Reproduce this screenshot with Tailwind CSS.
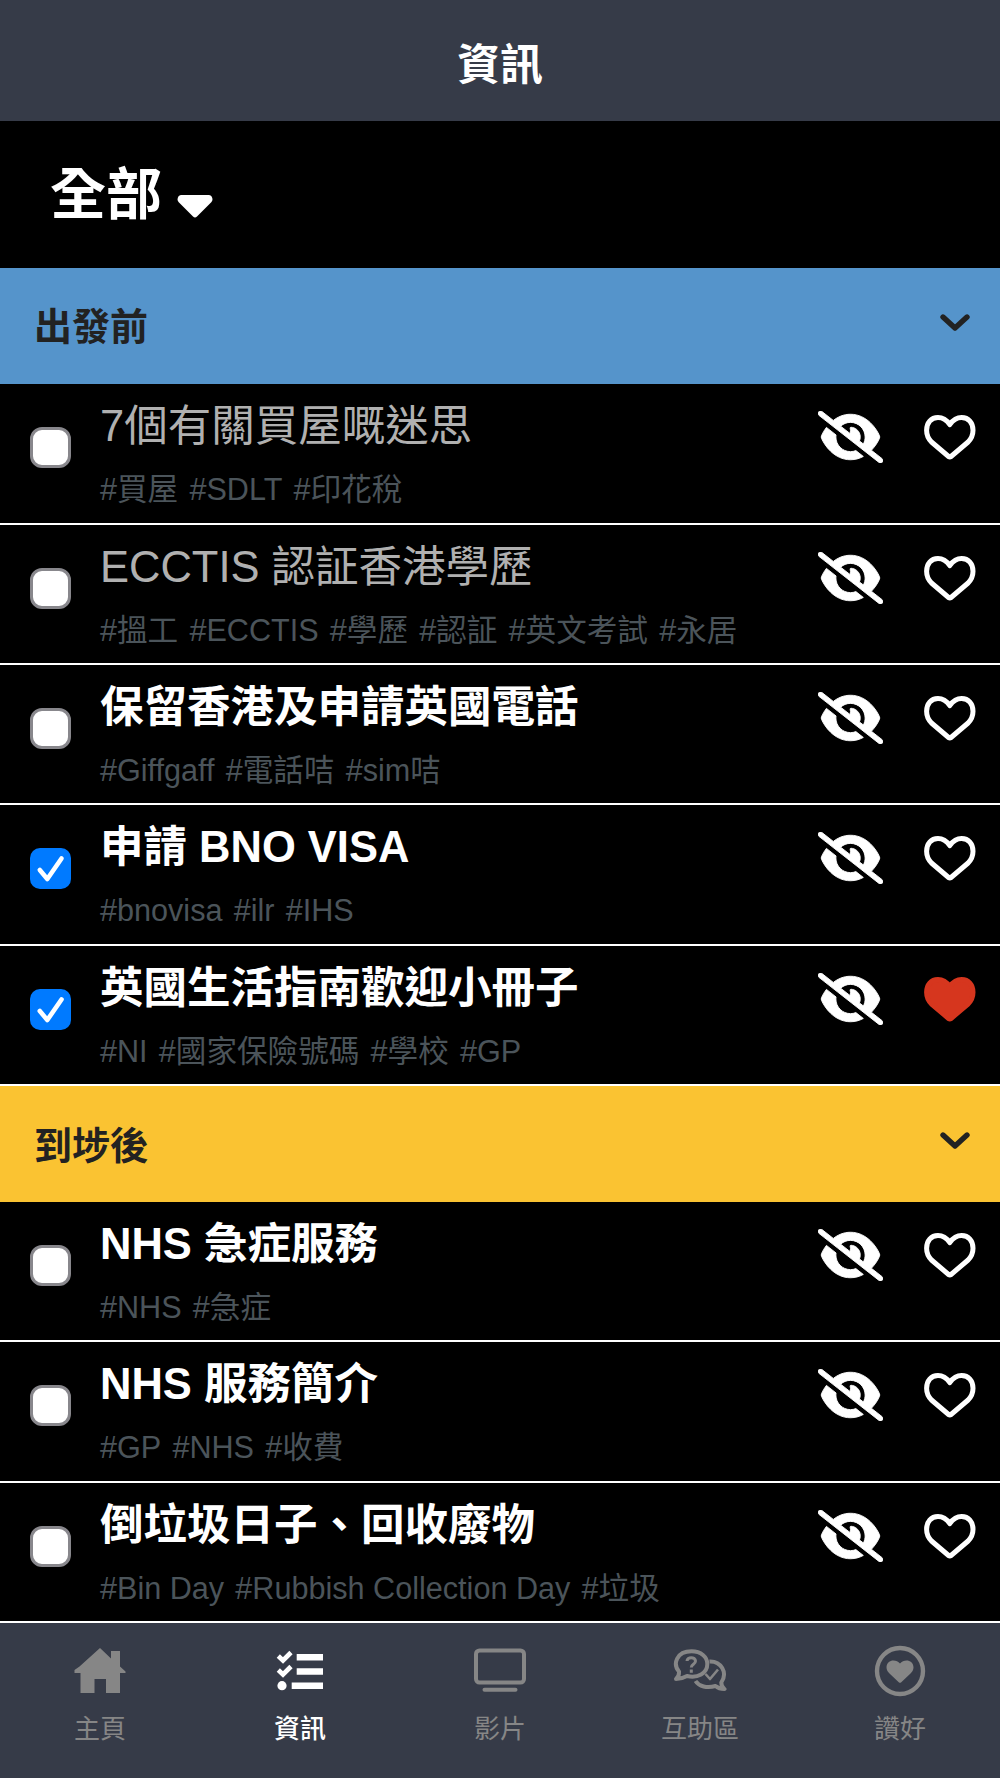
<!DOCTYPE html>
<html lang="zh-HK">
<head>
    <meta charset="UTF-8">
    <meta name="viewport" content="width=device-width, initial-scale=1.0">
    <title>資訊</title>
    <script src="https://cdn.jsdelivr.net/npm/@tailwindcss/browser@4"></script>
    <style>
        body {
            font-family: 'Liberation Sans', 'Noto Sans CJK TC', sans-serif;
        }
    </style>
</head>
<body class="bg-black text-white w-[1000px] h-[1778px] flex flex-col overflow-hidden">

    <!-- shared icons -->
    <svg class="hidden">
        <symbol id="eye-slash" viewBox="0 0 640 512">
            <path fill="currentColor" stroke="currentColor" stroke-width="9" d="M38.8 5.1C28.4-3.1 13.3-1.2 5.1 9.2S-1.2 34.7 9.2 42.9l592 464c10.4 8.2 25.5 6.3 33.7-4.1s6.3-25.5-4.1-33.7L525.6 386.7c39.6-40.6 66.4-86.1 79.9-118.4c3.3-7.9 3.3-16.7 0-24.6c-14.9-35.7-46.2-87.7-93-131.1C465.5 68.8 400.8 32 320 32c-68.2 0-125 26.3-169.3 60.8L38.8 5.1zM223.1 149.5C248.6 126.2 282.7 112 320 112c79.5 0 144 64.5 144 144c0 24.9-6.3 48.3-17.4 68.7L408 294.5c8.4-19.3 10.6-41.4 4.8-63.3c-11.1-41.5-47.8-69.4-88.6-71.1c-5.8-.2-9.2 6.1-7.4 11.7c2.1 6.4 3.3 13.2 3.3 20.3c0 10.2-2.4 19.8-6.6 28.3l-90.3-70.8zM373 389.9c-16.4 6.5-34.3 10.1-53 10.1c-79.5 0-144-64.5-144-144c0-6.9 .5-13.6 1.4-20.2L83.1 161.5C60.3 191.2 44 220.8 34.5 243.7c-3.3 7.9-3.3 16.7 0 24.6c14.9 35.7 46.2 87.7 93 131.1C174.5 443.2 239.2 480 320 480c47.8 0 89.9-12.9 126.2-32.5L373 389.9z"/>
        </symbol>
        <symbol id="heart" viewBox="0 0 52 45">
            <path stroke="currentColor" stroke-width="5" stroke-linejoin="round" d="M25.8 9.6C22.5 5 18 2.6 14 2.6C7 2.6 2.6 8 2.6 15.3C2.6 20.5 4 23.5 7.5 27L24.6 41.5Q25.8 42.2 27 41.5L44.1 27C47.6 23.5 49 20.5 49 15.3C49 8 44.6 2.6 37.6 2.6C33.6 2.6 29.1 5 25.8 9.6Z"/>
        </symbol>
        <symbol id="chevron" viewBox="0 0 30 18">
            <path fill="none" stroke="currentColor" stroke-width="5.4" stroke-linecap="round" stroke-linejoin="round" d="M3 3L15 14L27 3"/>
        </symbol>
    </svg>

    <header class="h-[121px] shrink-0 bg-[#363b48] flex items-center justify-center pt-[9px]">
        <h1 class="text-[43px] leading-none font-bold">資訊</h1>
    </header>

    <div class="h-[147px] shrink-0 flex items-center pl-[50px]">
        <span class="text-[56px] leading-none font-bold">全部</span>
        <svg class="w-[36px] h-[23px] ml-[15px] mt-[24px]" viewBox="0 0 36 23">
            <path fill="currentColor" d="M4 0H32Q35.5 0.5 35.5 5L34.5 7L20 21.5Q18 23.5 16 21.5L1.5 7L0.5 5Q0.5 0.5 4 0Z"/>
        </svg>
    </div>

    <main class="flex-1 min-h-0">
        <section>
            <div class="h-[116.4px] bg-[#5594cb] text-[#222] flex items-center justify-between pl-[34px] pr-[30px] pt-[2px]">
                <h2 class="text-[38px] leading-none font-bold">出發前</h2>
                <svg class="w-[30px] h-[18px] mb-[9px]"><use href="#chevron"/></svg>
            </div>
            <ul id="before"></ul>
        </section>
        <section>
            <div class="h-[115.8px] bg-[#fac332] text-[#222] flex items-center justify-between pl-[34px] pr-[30px] pt-[3px]">
                <h2 class="text-[38px] leading-none font-bold">到埗後</h2>
                <svg class="w-[30px] h-[18px] mb-[9px]"><use href="#chevron"/></svg>
            </div>
            <ul id="after"></ul>
        </section>
    </main>

    <nav class="h-[155px] shrink-0 bg-[#363b48] text-[#868686] grid grid-cols-5 pt-[22px] text-[26px] leading-none">
        <a class="flex flex-col items-center gap-[19px]">
            <svg class="w-[52px] h-[52px]" viewBox="0 0 52 52" fill="currentColor">
                <path d="M26 3L37 13.5V6H46V21.5L51.5 26.5V28H46V48H32V34H20.5V48H6.5V28H0.5V25L5.5 21.5Z"/>
            </svg>
            <span>主頁</span>
        </a>
        <a class="flex flex-col items-center gap-[19px] text-white">
            <svg class="w-[52px] h-[52px]" viewBox="0 0 52 52" fill="currentColor">
                <path d="M22.7 9H49V15.5H22.7ZM22.7 23.2H49V29.7H22.7ZM17.7 37.5H49V44H17.7Z"/>
                <circle cx="8" cy="40.7" r="4.6"/>
                <path fill="none" stroke="currentColor" stroke-width="4.6" d="M4.3 11L9 15.5L17 7.5M4.3 25L9 29.5L17 21.5"/>
            </svg>
            <span class="font-medium">資訊</span>
        </a>
        <a class="flex flex-col items-center gap-[19px]">
            <svg class="w-[52px] h-[52px]" viewBox="0 0 52 52" fill="none" stroke="currentColor" stroke-width="4">
                <rect x="2" y="5.5" width="48" height="32" rx="3.5"/>
                <path stroke-linecap="round" d="M10.5 44.8H41.5"/>
            </svg>
            <span>影片</span>
        </a>
        <a class="flex flex-col items-center gap-[19px]">
            <svg class="w-[54px] h-[52px]" viewBox="0 0 54 52" fill="none" stroke="currentColor" stroke-width="4" stroke-linejoin="round">
                <path d="M6 26.5C-0.5 19 3.5 6.3 18.5 6.3C28 6.300 34.300 12 34.300 19C34.300 28.500 24.500 33.500 14 31C10 33.300 6.500 34 3 34C5.200 32 6.300 29.500 6 26.500Z"/>
                <path d="M36.500 16.500C48 16 55 27.500 48.300 37.500C48.300 40 49.500 42.500 51.500 44C48 44 44.500 42.800 42.500 41C34 43.500 26 41.500 22.500 36"/>
                <path stroke-width="3" d="M14 16C14 11.500 22.500 11.500 22.500 16C22.500 19.500 18.300 18.800 18.300 22.500M18.300 24.500V27.800"/>
                <path stroke-width="2.6" d="M32.500 29L37 34L45 24.500"/>
            </svg>
            <span>互助區</span>
        </a>
        <a class="flex flex-col items-center gap-[19px]">
            <svg class="w-[52px] h-[52px]" viewBox="0 0 52 52" fill="currentColor">
                <circle cx="26" cy="26" r="23" fill="none" stroke="currentColor" stroke-width="4.4"/>
                <path d="M26 18.5C30 13.5 39.5 14.5 39.5 22.5C39.5 25 38 27 36.5 28.5L27 37.5Q26 38.2 25 37.5L15.5 28.5C14 27 12.5 25 12.5 22.5C12.5 14.5 22 13.5 26 18.5Z"/>
            </svg>
            <span>讚好</span>
        </a>
    </nav>

    <script>
        const before = [
            { title: '7個有關買屋嘅迷思', tags: ['買屋', 'SDLT', '印花稅'], read: true },
            { title: 'ECCTIS 認証香港學歷', tags: ['搵工', 'ECCTIS', '學歷', '認証', '英文考試', '永居'], read: true },
            { title: '保留香港及申請英國電話', tags: ['Giffgaff', '電話咭', 'sim咭'] },
            { title: '申請 BNO VISA', tags: ['bnovisa', 'ilr', 'IHS'], done: true },
            { title: '英國生活指南歡迎小冊子', tags: ['NI', '國家保險號碼', '學校', 'GP'], done: true, liked: true },
        ];
        const after = [
            { title: 'NHS 急症服務', tags: ['NHS', '急症'] },
            { title: 'NHS 服務簡介', tags: ['GP', 'NHS', '收費'] },
            { title: '倒垃圾日子、回收廢物', tags: ['Bin Day', 'Rubbish Collection Day', '垃圾'] },
        ];

        const checked = `
            <span class="w-[41px] h-[41px] mt-[43px] rounded-[10px] bg-[#007aff] shrink-0">
                <svg class="w-full h-full" viewBox="0 0 41 41" fill="none" stroke="#fff" stroke-width="4.6" stroke-linecap="round" stroke-linejoin="round">
                    <path d="M9.8 22L17.3 31L31.5 10.5"/>
                </svg>
            </span>`;
        const unchecked = `<span class="w-[41px] h-[41px] mt-[43px] rounded-[12px] bg-white border-3 border-[#88878c] shrink-0"></span>`;

        function row(item) {
            return `
            <li class="h-[140.35px] border-b-2 border-white flex items-start pl-[30px] pr-[24px]">
                ${item.done ? checked : unchecked}
                <div class="flex-1 ml-[29px] pt-[15px] whitespace-nowrap">
                    <h3 class="text-[43.5px] leading-[54px] ${item.read ? 'text-[#b0b0b0]' : 'font-bold'}">${item.title}</h3>
                    <p class="flex gap-[11.2px] text-[30.6px] leading-[40px] mt-[16px] text-[#4b545a]">${item.tags.map(t => `<span>#${t}</span>`).join('')}</p>
                </div>
                <svg class="w-[65px] h-[52px] mt-[27px] shrink-0"><use href="#eye-slash"/></svg>
                <svg class="w-[52px] h-[45px] ml-[41px] mt-[31px] shrink-0 ${item.liked ? 'text-[#d6361e] fill-current' : 'fill-none'}"><use href="#heart"/></svg>
            </li>`;
        }

        document.getElementById('before').innerHTML = before.map(row).join('');
        document.getElementById('after').innerHTML = after.map(row).join('');
    </script>
</body>
</html>
